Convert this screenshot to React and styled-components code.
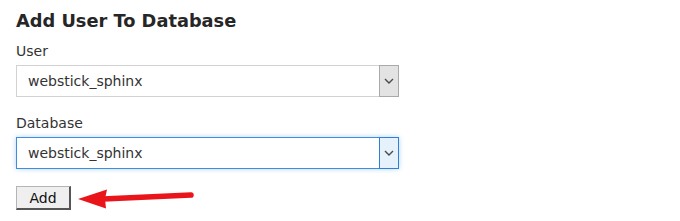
import React from 'react';
import styled, { createGlobalStyle } from 'styled-components';

const GlobalStyle = createGlobalStyle`
    body {
        margin: 0;
        background: #fff;
        font-family: "DejaVu Sans", Verdana, sans-serif;
    }
`;

const Chevron = () => (
    <svg width="10" height="6" viewBox="0 0 10 6">
        <path d="M1 1 L5 5 L9 1" fill="none" stroke="#4a4a4a" strokeWidth="1.4" />
    </svg>
);

const RedArrow = () => (
    <svg width="122" height="24" viewBox="0 0 122 24">
        <line x1="28" y1="13" x2="116" y2="9" stroke="#ea151b" strokeWidth="5.5" strokeLinecap="round" />
        <polygon points="3,13 32,3.5 30,13 31,22.5" fill="#ea151b" />
    </svg>
);

const Select = ({ value, focused }) => (
    <SelectBox $focused={focused}>
        <span className="value">{value}</span>
        <ArrowBox $focused={focused}>
            <Chevron />
        </ArrowBox>
    </SelectBox>
);

const App = () => {
    return (
        <Form>
            <GlobalStyle />
            <Title>Add User To Database</Title>
            <Field>
                <Label>User</Label>
                <Select value="webstick_sphinx" />
            </Field>
            <Field>
                <Label>Database</Label>
                <Select value="webstick_sphinx" focused />
            </Field>
            <Actions>
                <Button>Add</Button>
                <RedArrow />
            </Actions>
        </Form>
    );
}

export default App;

const Form = styled.div`
    display: flex;
    flex-direction: column;
    padding: 10px 0 0 16px;
    color: #333;
`;

const Title = styled.h2`
    margin: 0 0 10px;
    font-size: 17.8px;
    line-height: 22px;
    font-weight: bold;
    color: #262626;
`;

const Field = styled.div`
    display: flex;
    flex-direction: column;
    margin-bottom: 17px;
`;

const Label = styled.label`
    font-size: 14px;
    line-height: 18px;
    margin-bottom: 5px;
    color: #333;
`;

const SelectBox = styled.div`
    box-sizing: border-box;
    width: 383px;
    height: 32px;
    display: flex;
    align-items: stretch;
    background: #fff;
    border: 1px solid ${p => (p.$focused ? '#3d8ee0' : '#d2d2d2')};
    box-shadow: ${p => (p.$focused ? '0 0 5px rgba(90, 160, 230, 0.45)' : 'none')};

    .value {
        flex: 1;
        display: flex;
        align-items: center;
        padding-left: 11px;
        font-size: 14px;
        color: #333;
    }
`;

const ArrowBox = styled.div`
    box-sizing: border-box;
    width: 20px;
    margin: -1px -1px -1px 0;
    display: flex;
    align-items: center;
    justify-content: center;
    background: ${p => (p.$focused ? '#e5f1fb' : '#e3e3e3')};
    border: 1px solid ${p => (p.$focused ? '#2f7fd6' : '#a9a9a9')};
`;

const Actions = styled.div`
    display: flex;
    align-items: flex-start;
    gap: 4px;
`;

const Button = styled.button`
    box-sizing: border-box;
    width: 55px;
    height: 24px;
    padding: 0;
    font-family: "DejaVu Sans", Verdana, sans-serif;
    font-size: 14px;
    color: #111;
    background: #efefef;
    border: 1px solid #b5b5b5;
    border-right: 2px solid #555;
    border-bottom: 2px solid #555;
`;
